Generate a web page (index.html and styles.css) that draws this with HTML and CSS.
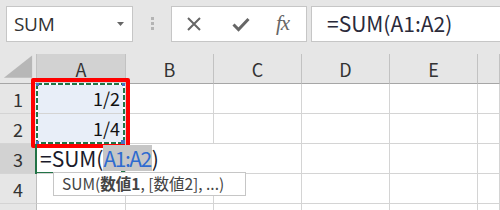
FILE: index.html
```html
<!DOCTYPE html>
<html>
<head>
<meta charset="utf-8">
<link rel="stylesheet" href="styles.css">
</head>
<body>
<div class="toolbar">
  <div class="namebox">
    <span class="name">SUM</span>
    <svg class="caret" width="7" height="4" viewBox="0 0 7 4"><polygon points="0,0 7,0 3.5,4" fill="#666"/></svg>
  </div>
  <div class="grip"><i></i><i></i><i></i></div>
  <div class="iconbox">
    <svg class="ico" width="16" height="14" viewBox="0 0 16 14"><path d="M2 1 L14 13 M14 1 L2 13" stroke="#666" stroke-width="2" fill="none"/></svg>
    <svg class="ico" width="18" height="15" viewBox="0 0 18 15"><path d="M1.5 7.5 L6.5 12.5 L16.5 2" stroke="#666" stroke-width="3" fill="none"/></svg>
    <span class="fx">fx</span>
  </div>
  <div class="formula">=SUM(A1:A2)</div>
</div>
<div class="sheet">
  <div class="hd corner"><svg width="37" height="30" viewBox="0 0 37 30"><polygon points="33,1 33,24 4,24" fill="#b7b7b7"/></svg></div>
  <div class="hd col sel">A</div>
  <div class="hd col">B</div>
  <div class="hd col">C</div>
  <div class="hd col">D</div>
  <div class="hd col">E</div>
  <div class="hd col"></div>

  <div class="hd row">1</div>
  <div class="c num rng">1/2</div><div class="c"></div><div class="c"></div><div class="c"></div><div class="c"></div><div class="c"></div>

  <div class="hd row">2</div>
  <div class="c num rng">1/4</div><div class="c"></div><div class="c"></div><div class="c"></div><div class="c"></div><div class="c"></div>

  <div class="hd row sel">3</div>
  <div class="c edit">=SUM(<span class="ref">A1:A2</span>)</div><div class="c nb"></div><div class="c"></div><div class="c"></div><div class="c"></div><div class="c"></div>

  <div class="hd row">4</div>
  <div class="c"></div><div class="c"></div><div class="c"></div><div class="c"></div><div class="c"></div><div class="c"></div>

  <div class="hd row"></div>
  <div class="c"></div><div class="c"></div><div class="c"></div><div class="c"></div><div class="c"></div><div class="c"></div>

  <svg class="ants" width="90" height="62" viewBox="0 0 90 62">
    <rect x="1" y="1" width="87" height="59" fill="none" stroke="#fff" stroke-width="2"/>
    <rect x="1" y="1" width="87" height="59" fill="none" stroke="#217346" stroke-width="2" stroke-dasharray="5 2"/>
    <rect x="0" y="0" width="3" height="3" fill="#4472c4"/>
    <rect x="86" y="0" width="3" height="3" fill="#4472c4"/>
    <rect x="0" y="58" width="3" height="3" fill="#4472c4"/>
    <rect x="85" y="57" width="4" height="4" fill="#4472c4"/>
  </svg>
  <div class="redbox"></div>
  <div class="active"></div>
  <div class="handle"></div>
  <div class="tip">SUM(<b>数値1</b>, [数値2], ...)</div>
</div>
</body>
</html>
```
FILE: styles.css
```css
html, body {
  margin: 0;
  padding: 0;
  background: #ffffff;
  overflow: hidden;
}
body {
  width: 500px;
  height: 210px;
  font-family: "Noto Sans CJK JP", "Noto Sans", sans-serif;
}
.toolbar {
  height: 54px;
  box-sizing: border-box;
  background: #e6e6e6;
  display: flex;
  align-items: flex-start;
  padding: 6px 0 0 6px;
}
.namebox {
  width: 127px;
  height: 36px;
  box-sizing: border-box;
  background: #fff;
  border: 1px solid #c6c6c6;
  display: flex;
  align-items: center;
  justify-content: space-between;
  padding: 0 8px 0 7px;
}
.name {
  font-family: "Open Sans", "Noto Sans", sans-serif;
  font-size: 19px;
  color: #333;
  letter-spacing: -0.3px;
}
.grip {
  width: 37px;
  display: flex;
  flex-direction: column;
  align-items: center;
  gap: 2px;
  padding-top: 11px;
  padding-left: 1px;
}
.grip i {
  display: block;
  width: 3px;
  height: 3px;
  background: #b4b4b4;
}
.iconbox {
  width: 136px;
  height: 36px;
  box-sizing: border-box;
  background: #fff;
  border: 1px solid #c6c6c6;
  display: flex;
  align-items: center;
  padding-left: 14px;
  gap: 0;
}
.ico { display: block; }
.iconbox .ico:first-child { margin-right: 30px; }
.iconbox .ico:nth-child(2) { margin-right: 26px; }
.fx {
  font-family: "Liberation Serif", serif;
  font-style: italic;
  font-size: 21px;
  color: #666;
  letter-spacing: -1px;
  margin-top: -2px;
}
.formula {
  flex: 1;
  height: 36px;
  box-sizing: border-box;
  margin-left: 4px;
  margin-right: -2px;
  background: #fff;
  border: 1px solid #c6c6c6;
  padding-left: 15px;
  font-size: 21px;
  line-height: 32px;
  color: #2a2a3a;
  white-space: nowrap;
}
.sheet {
  position: relative;
  display: grid;
  grid-template-columns: 37px 89px 88px 88px 88px 88px 1fr;
  grid-auto-rows: 30px;
}
.hd {
  box-sizing: border-box;
  background: #e6e6e6;
  color: #333;
  font-size: 18px;
  display: flex;
  align-items: center;
  justify-content: center;
}
.hd.col {
  border-right: 1px solid #c2c2c2;
  border-bottom: 1px solid #a6a6a6;
  padding-top: 1px;
}
.hd.corner {
  border-right: 1px solid #c2c2c2;
  border-bottom: 1px solid #a6a6a6;
  align-items: flex-start;
  justify-content: flex-start;
}
.hd.corner svg { display: block; }
.hd.row {
  border-right: 1px solid #bdbdbd;
  border-bottom: 1px solid #d4d4d4;
}
.hd.sel { background: #d2d2d2; }
.c {
  box-sizing: border-box;
  border-right: 1px solid #d4d4d4;
  border-bottom: 1px solid #d4d4d4;
  font-size: 18px;
  color: #111;
  white-space: nowrap;
}
.c.nb { border-right-color: transparent; }
.c.num {
  text-align: right;
  padding-right: 5px;
  line-height: 28px;
}
.c.rng { background: #e8eef8; }
.c.edit {
  position: relative;
  z-index: 1;
  overflow: visible;
  font-size: 21px;
  line-height: 26px;
  padding-top: 1px;
  padding-left: 3px;
  color: #1a1a2a;
}
.ref {
  color: #2e6bd0;
  background: #c6c6c6;
  display: inline-block;
  line-height: 26px;
  letter-spacing: -1.5px;
  padding-right: 1px;
}
.ants {
  position: absolute;
  left: 36px;
  top: 29px;
}
.redbox {
  position: absolute;
  left: 31px;
  top: 24px;
  width: 99px;
  height: 70px;
  box-sizing: border-box;
  border: 4px solid #ff0000;
  border-radius: 2px;
}
.active {
  position: absolute;
  left: 35px;
  top: 90px;
  width: 86px;
  height: 30px;
  box-sizing: border-box;
  border-left: 2px solid #217346;
  border-bottom: 2px solid #217346;
}
.handle {
  position: absolute;
  left: 121px;
  top: 116px;
  width: 5px;
  height: 5px;
  background: #217346;
  outline: 1px solid #fff;
}
.tip {
  position: absolute;
  left: 53px;
  top: 118px;
  width: 193px;
  height: 24px;
  box-sizing: border-box;
  background: #fff;
  border: 1px solid #c6c6c6;
  padding-left: 8px;
  font-size: 15.5px;
  line-height: 21px;
  color: #444;
  white-space: nowrap;
  z-index: 2;
}
.tip b { font-weight: bold; }
```
